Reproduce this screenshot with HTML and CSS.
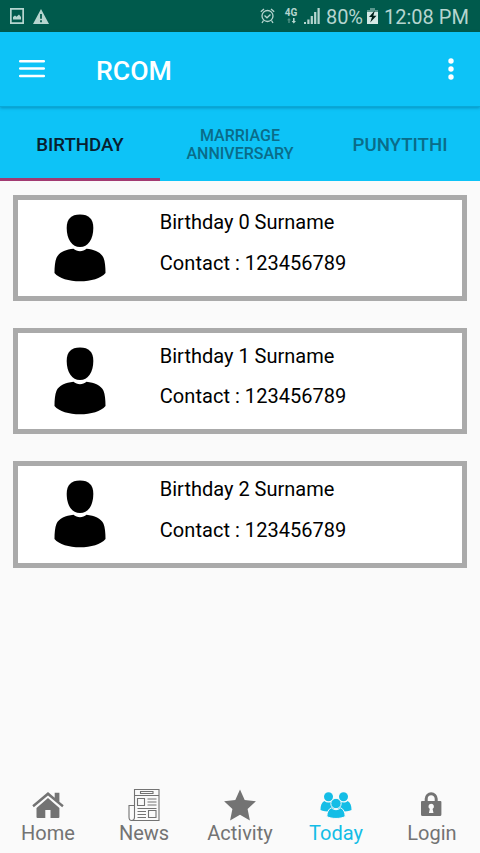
FILE: index.html
```html
<!DOCTYPE html>
<html lang="en">
<head>
<meta charset="utf-8">
<title>RCOM</title>
<link rel="stylesheet" href="styles.css">
</head>
<body>
<svg width="0" height="0" class="defs">
  <symbol id="person" viewBox="0 0 52 68">
    <path d="M26 .5c9 0 13.300 4.500 13.300 13.500C39.300 25.500 34 33 26 33S12.700 25.500 12.700 14C12.700 5 17 .5 26 .5z"/>
    <path d="M19.500 34.800c3.500 3.200 9.500 3.200 13 0 8 .8 14.500 3.500 17 9 1.500 3.600 2 9.200 2 15.200-4.500 5.500-14.500 8.300-25.500 8.300s-21-2.800-25.500-8.300c0-6 .5-11.600 2-15.200 2.500-5.500 9-8.200 17-9z"/>
  </symbol>
</svg>
<div class="screen">
  <header class="status">
    <svg class="st-image" width="14" height="16" viewBox="0 0 14 16"><path fill-rule="evenodd" d="M0 0h14v16H0zM1.700 1.800v12.400h10.600V1.800zM3 11.500V9l2-1.500 1.500 1.200L9 6.500l2 2.500v2.500z"/></svg>
    <svg class="st-warn" width="16" height="15" viewBox="0 0 16 15"><path fill-rule="evenodd" d="M8 0l8 15H0zM7.100 5v4.800h1.800V5zM7.100 11.300v1.900h1.800v-1.900z"/></svg>
    <svg class="st-alarm" width="15" height="16" viewBox="0 0 15 16"><g fill="none" stroke="currentColor" stroke-width="1.300"><circle cx="7.500" cy="8" r="5.500"/><path d="M.8 3.800L4 1M14.200 3.800L11 1M4.500 7.500l2.500 2.300 3.500-3.300M3.500 12.500l-1.500 2.500M11.500 12.500l1.500 2.500"/></g></svg>
    <div class="net"><span>4G</span><svg width="9" height="6" viewBox="0 0 9 6"><path opacity=".45" d="M2 0l2 2.200H2.700V5H1.300V2.200H0z"/><path d="M6 0h1.600v3H9L6.800 5.500 4.600 3H6z"/></svg></div>
    <svg class="st-signal" width="16" height="16" viewBox="0 0 16 16"><path d="M0 14h2v2H0zM3.300 11.500h2.200V16H3.300zM6.700 8h2.200v8H6.700zM10.100 4h2.200v12h-2.200zM13.500 0h2.200v16h-2.200z"/></svg>
    <span class="pct">80%</span>
    <svg class="st-batt" width="11" height="16" viewBox="0 0 11 16"><path opacity=".5" d="M3 0h5v2h3v4H0V2h3z"/><path fill="#d5eae6" d="M0 4h11v12H0z"/><path fill="#00201a" d="M7.800 2.500L2 9h3l-1.800 5.500L9.500 7.700H6.300z"/></svg>
    <span class="time">12:08 PM</span>
  </header>
  <div class="appbar">
    <svg class="menu" width="26" height="20" viewBox="0 0 26 20"><path d="M1.200 2.300h23.600M1.200 9.600h23.600M1.200 17h23.600" stroke="#fff" stroke-width="2.500" stroke-linecap="round"/></svg>
    <h1>RCOM</h1>
    <svg class="more" width="6" height="22" viewBox="0 0 6 22"><g fill="#fff"><circle cx="3" cy="3" r="2.700"/><circle cx="3" cy="11" r="2.700"/><circle cx="3" cy="19" r="2.700"/></g></svg>
  </div>
  <nav class="tabs">
    <div class="tab active">BIRTHDAY</div>
    <div class="tab two">MARRIAGE<br>ANNIVERSARY</div>
    <div class="tab">PUNYTITHI</div>
  </nav>
  <main class="list">
    <article class="card"><svg class="avatar" width="52" height="68"><use href="#person"/></svg><div class="info"><p>Birthday 0 Surname</p><p class="contact">Contact : 123456789</p></div></article>
    <article class="card"><svg class="avatar" width="52" height="68"><use href="#person"/></svg><div class="info"><p>Birthday 1 Surname</p><p class="contact">Contact : 123456789</p></div></article>
    <article class="card"><svg class="avatar" width="52" height="68"><use href="#person"/></svg><div class="info"><p>Birthday 2 Surname</p><p class="contact">Contact : 123456789</p></div></article>
  </main>
  <footer class="bottom">
    <div class="item"><svg width="32" height="32" viewBox="0 -.7 32 32"><path d="M16 8.300L4.500 18.200v9q0 1 1 1h7.800v-7.900h5.200v7.900h7.900q1 0 1-1v-9z"/><path d="M16 2.400L.3 15.600l1.500 1.900L16 5.700l14.200 11.800 1.500-1.900-4.300-3.600V3h-4.700v5z"/></svg><span>Home</span></div>
    <div class="item"><svg width="32" height="34" viewBox="0 0 32 34"><g fill="none" stroke="currentColor" stroke-width="1.100"><path d="M6.500 28V1.500H31V32.500H3.500C1.500 32.500 1 31 1 29V17.500H6.500V29c0 2-1 3.500-3 3.500M6.500 7.500H31M12.500 3.500h12.500v2H12.500zM9.500 10.500h7v7h-7zM20.500 22.500h7.500v7h-7.500zM19.500 11h9M19.500 14h9M19.500 17h9M9.500 20.500h19M9.500 23.500h8.500M9.500 26.500h8.500M9.500 29.500h8.500"/></g></svg><span>News</span></div>
    <div class="item"><svg width="32" height="32" viewBox="0 0 32 32"><path d="M16 .5l4.700 10.500 11.200 1.200-8.300 7.700 2.300 11.500L16 25.700l-9.900 5.700 2.300-11.500L.1 12.200 11.300 11z"/></svg><span>Activity</span></div>
    <div class="item on"><svg width="32" height="32" viewBox="0 -.5 32 32"><circle cx="8.500" cy="7.200" r="4.500"/><circle cx="23.500" cy="7.200" r="4.500"/><path d="M4.300 11.500c2.500 2 5.500 2 8 0l4 6.500-5.500 4c-4 0-8-.3-10.300-1.500 0-4 1-7.500 3.800-9zM27.700 11.500c-2.500 2-5.500 2-8 0l-4 6.500 5.500 4c4 0 8-.3 10.300-1.500 0-4-1-7.500-3.800-9z"/><g stroke="#fafafa" stroke-width="1"><path d="M11.300 18.300c3 2.500 6.400 2.500 9.400 0 3 1.300 4.300 4.700 4.500 8.700-4.300 2.600-14.100 2.600-18.400 0 .2-4 1.500-7.400 4.500-8.700z"/><circle cx="16" cy="14" r="5.200"/></g></svg><span>Today</span></div>
    <div class="item"><svg width="32" height="32" viewBox="0 -1 32 32"><path d="M10.200 12.500V8.800a5 5 0 0 1 10 0v3.700" fill="none" stroke="currentColor" stroke-width="3"/><path fill-rule="evenodd" d="M6 11h18.400q1 0 1 1v12.500q0 1.500-1.500 1.500H6.500Q5 26 5 24.500V12q0-1 1-1zM15.200 13.800a2.800 2.800 0 0 0-1.400 5.200l-.9 4h4.600l-.9-4a2.800 2.800 0 0 0-1.400-5.200z"/></svg><span>Login</span></div>
  </footer>
</div>
</body>
</html>
```
FILE: styles.css
```css
* { box-sizing: border-box; margin: 0; padding: 0; }
body { background: #fafafa; font-family: Roboto, sans-serif; }
svg { display: block; flex: none; fill: currentColor; }
.defs { position: absolute; }
.screen { width: 480px; height: 853px; display: flex; flex-direction: column; overflow: hidden; }

.status { height: 32px; flex: none; display: flex; align-items: center; background: #005a4c; color: #b5d5cf; font-size: 20px; white-space: nowrap; padding-right: 11px; }
.st-image { margin-left: 10px; }
.st-warn { margin-left: 9px; }
.st-alarm { margin-left: auto; }
.net { width: 14px; margin-left: 9px; font-size: 10px; font-weight: 700; line-height: 9px; display: flex; flex-direction: column; align-items: center; gap: 1px; }
.st-signal { margin-left: 6px; }
.pct { margin-left: 6px; width: 38px; line-height: 32px; padding-top: 1px; letter-spacing: -0.1px; }
.st-batt { margin-left: 3px; }
.time { margin-left: 6px; width: 85px; line-height: 32px; padding-top: 1px; }

.appbar { height: 75px; flex: none; display: flex; align-items: center; padding: 0 26.500px 0 19px; background: #0dc3f7; border-bottom: 1px solid #08a8d7; box-shadow: 0 1px 3px rgba(0, 70, 100, .4); position: relative; }
.appbar h1 { margin: 3px auto 0 51px; color: #fff; font-size: 26.670px; font-weight: 500; line-height: 32px; }

.tabs { height: 74px; flex: none; display: grid; grid-template-columns: repeat(3, 1fr); background: #0dc3f7; }
.tab { display: flex; align-items: center; justify-content: center; padding-top: 4px; border-bottom: 3px solid transparent; color: #0a6c89; font-size: 18.670px; font-weight: 500; text-align: center; }
.tab.two { font-size: 16px; line-height: 18px; }
.tab.active { color: #08202f; border-bottom-color: #a23a72; }

.list { flex: 1; display: flex; flex-direction: column; gap: 26.700px; padding: 13.500px 13.300px 0; }
.card { height: 106.600px; flex: none; display: flex; border: 5.300px solid #aaa; background: #fff; color: #000; }
.avatar { margin: 14px 0 0 36px; }
.info { margin: 10.800px 0 0 53.500px; font-size: 20px; line-height: 24px; white-space: nowrap; }
.contact { margin-top: 16.800px; letter-spacing: 0.040px; }

.bottom { height: 66px; flex: none; display: grid; grid-template-columns: repeat(5, 96px); color: #737373; }
.item { display: flex; flex-direction: column; align-items: center; }
.item svg { height: 34px; position: relative; top: 1px; }
.item span { font-size: 20px; line-height: 24px; }
.item.on { color: #14bde6; }
```
